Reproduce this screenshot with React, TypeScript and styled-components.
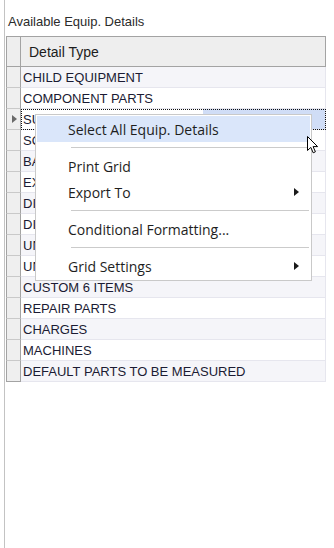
import React from "react"
import styled, { createGlobalStyle } from "styled-components"

const GlobalStyle = createGlobalStyle`
  html, body {
    margin: 0;
    padding: 0;
    background: #ffffff;
  }
`

const Page = styled.div`
  position: relative;
  width: 334px;
  height: 548px;
  overflow: hidden;
  background: #ffffff;
`

const Panel = styled.div`
  margin-left: 4px;
  height: 548px;
  border-left: 1px solid #c3c3c3;
  display: flex;
  flex-direction: column;
`

const Title = styled.div`
  font-family: "Liberation Sans", Arial, sans-serif;
  font-size: 13px;
  line-height: 16px;
  color: #2b2b2b;
  padding: 14px 0 0 3px;
  height: 22px;
`

const Grid = styled.div`
  margin-left: 1px;
  width: 320px;
  display: flex;
  flex-direction: column;
  font-family: "Liberation Sans", Arial, sans-serif;
`

const HeaderRow = styled.div`
  display: flex;
  height: 29px;
  border-top: 1px solid #a3a3a3;
  border-bottom: 1px solid #a3a3a3;
  background: #eeeeee;
`

const Indicator = styled.div<{ $last?: boolean }>`
  width: 13px;
  flex: none;
  border-left: 1px solid #a3a3a3;
  border-right: 1px solid #a3a3a3;
  border-bottom: ${({ $last }) => ($last ? "1px solid #a3a3a3" : "1px solid #c9c9c9")};
  background: #efefef;
  display: flex;
  align-items: center;
  justify-content: center;
`

const HeaderIndicator = styled.div`
  width: 13px;
  flex: none;
  border-left: 1px solid #a3a3a3;
  border-right: 1px solid #a3a3a3;
  background: #eeeeee;
`

const HeaderCell = styled.div`
  flex: 1;
  display: flex;
  align-items: center;
  padding-left: 8px;
  font-size: 14px;
  color: #1c1c1c;
  border-right: 1px solid #a3a3a3;
`

const Row = styled.div`
  display: flex;
  height: 21px;
`

const Cell = styled.div<{ $alt: boolean; $selected?: boolean }>`
  flex: 1;
  box-sizing: border-box;
  display: flex;
  align-items: center;
  padding-left: 2px;
  font-size: 13px;
  color: #1b1b33;
  white-space: nowrap;
  overflow: hidden;
  background: ${({ $alt, $selected }) =>
    $selected
      ? "linear-gradient(to right, #ffffff 0, #ffffff 60%, #d0ddf6 60%)"
      : $alt
        ? "#f5f5f9"
        : "#ffffff"};
  border-bottom: 1px solid #e6e6ee;
  border-right: 1px solid #e6e6ee;
  outline: ${({ $selected }) => ($selected ? "1px dotted #111" : "none")};
  outline-offset: -1px;
`

const RowArrow = styled.div`
  width: 0;
  height: 0;
  border-top: 4px solid transparent;
  border-bottom: 4px solid transparent;
  border-left: 5px solid #6a6a6a;
  margin-left: 1px;
`

const Menu = styled.div`
  position: absolute;
  left: 35px;
  top: 114px;
  width: 273px;
  padding: 1px;
  background: #ffffff;
  border: 1px solid #c9c9c9;
  font-family: "Open Sans", "Noto Sans", sans-serif;
  font-size: 14px;
  color: #1e1e1e;
`

const MenuItem = styled.div<{ $active?: boolean }>`
  position: relative;
  height: 26px;
  display: flex;
  align-items: center;
  padding-left: 31px;
  background: ${({ $active }) => ($active ? "#dae6fa" : "transparent")};
`

const SubArrow = styled.div`
  position: absolute;
  right: 11px;
  top: 9px;
  width: 0;
  height: 0;
  border-top: 4px solid transparent;
  border-bottom: 4px solid transparent;
  border-left: 5px solid #1a1a1a;
`

const Separator = styled.div`
  height: 1px;
  margin: 5px 1px 5px 34px;
  background: #cbcbcb;
`

const Cursor = styled.svg`
  position: absolute;
  left: 306px;
  top: 135px;
`

// rows 3-10 are mostly covered by the context menu
const rows = [
  "CHILD EQUIPMENT",
  "COMPONENT PARTS",
  "SU",
  "SO",
  "BA",
  "EX",
  "DI",
  "DI",
  "UN",
  "UN",
  "CUSTOM 6 ITEMS",
  "REPAIR PARTS",
  "CHARGES",
  "MACHINES",
  "DEFAULT PARTS TO BE MEASURED",
]

export default function App() {
  return (
    <Page>
      <GlobalStyle />
      <Panel>
        <Title>Available Equip. Details</Title>
        <Grid>
          <HeaderRow>
            <HeaderIndicator />
            <HeaderCell>Detail Type</HeaderCell>
          </HeaderRow>
          {rows.map((name, i) => (
            <Row key={i}>
              <Indicator $last={i === rows.length - 1}>
                {i === 2 && <RowArrow />}
              </Indicator>
              <Cell $alt={i % 2 === 0} $selected={i === 2}>
                {name}
              </Cell>
            </Row>
          ))}
        </Grid>
      </Panel>

      <Menu>
        <MenuItem $active>Select All Equip. Details</MenuItem>
        <Separator />
        <MenuItem>Print Grid</MenuItem>
        <MenuItem>
          Export To
          <SubArrow />
        </MenuItem>
        <Separator />
        <MenuItem>Conditional Formatting...</MenuItem>
        <Separator />
        <MenuItem>
          Grid Settings
          <SubArrow />
        </MenuItem>
      </Menu>

      <Cursor width="14" height="20" viewBox="0 0 14 20">
        <path
          d="M1.5 1.5 L1.5 15.5 L4.8 12.4 L7.2 17.8 L9.4 16.8 L7.1 11.6 L11.6 11.6 Z"
          fill="#ffffff"
          stroke="#000000"
          strokeWidth="1"
          strokeLinejoin="miter"
        />
      </Cursor>
    </Page>
  )
}
